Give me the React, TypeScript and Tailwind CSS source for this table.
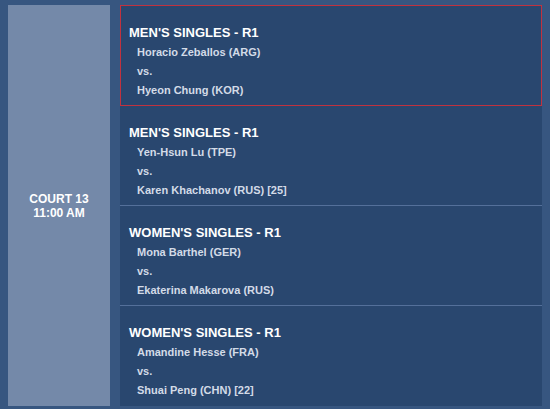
const MATCHES = [
  { title: "MEN'S SINGLES - R1", p1: "Horacio Zeballos (ARG)", p2: "Hyeon Chung (KOR)" },
  { title: "MEN'S SINGLES - R1", p1: "Yen-Hsun Lu (TPE)", p2: "Karen Khachanov (RUS) [25]" },
  { title: "WOMEN'S SINGLES - R1", p1: "Mona Barthel (GER)", p2: "Ekaterina Makarova (RUS)" },
  { title: "WOMEN'S SINGLES - R1", p1: "Amandine Hesse (FRA)", p2: "Shuai Peng (CHN) [22]" },
];

export default function App() {
  return (
    <div
      className="w-[550px] h-[409px] bg-[#375680] pt-[5px] px-[8px] flex gap-[10px] overflow-hidden"
      style={{ fontFamily: '"Liberation Sans", Arial, sans-serif' }}
    >
      {/* Court column */}
      <div className="w-[102px] h-[401px] bg-[#7489a9] flex flex-col items-center justify-center text-white font-bold text-[12px] leading-[14px]">
        <span>COURT 13</span>
        <span>11:00 AM</span>
      </div>

      {/* Matches */}
      <div className="flex-1 h-[401px] bg-[#29476f] flex flex-col">
        {MATCHES.map((m, i) => {
          const first = i === 0;
          const last = i === MATCHES.length - 1;
          return (
            <div
              key={i}
              className={
                first
                  ? "h-[101px] shrink-0 ring-1 ring-inset ring-[#c1323f] pl-[9px] pt-[18px]"
                  : last
                  ? "h-[100px] shrink-0 pl-[9px] pt-[17px]"
                  : "h-[100px] shrink-0 border-b border-[#54709a] pl-[9px] pt-[17px]"
              }
            >
              <div className="text-white font-bold text-[13px] leading-[19px]">{m.title}</div>
              <div className="pl-[8px] pt-[1px] text-[#d3dbe7] font-bold text-[11px] leading-[19px]">
                <div>{m.p1}</div>
                <div>vs.</div>
                <div>{m.p2}</div>
              </div>
            </div>
          );
        })}
      </div>
    </div>
  );
}
